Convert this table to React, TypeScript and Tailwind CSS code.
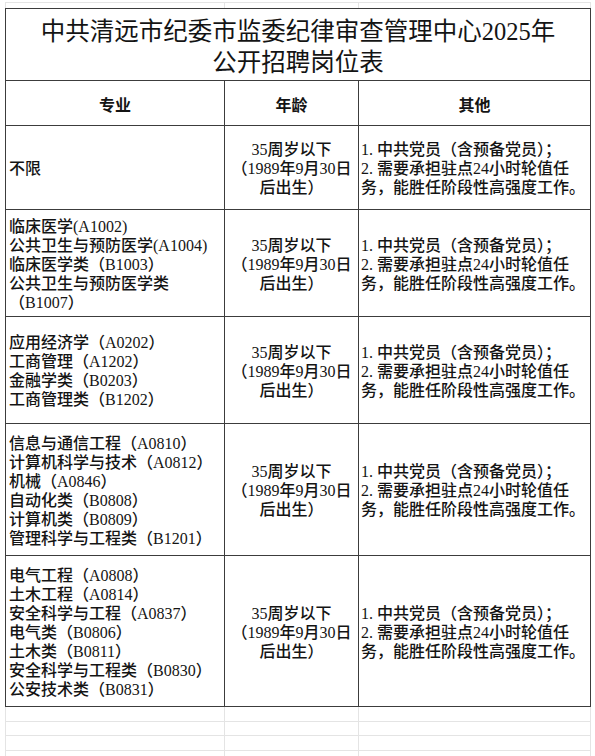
const serif = "font-['Liberation_Serif','Noto_Sans_CJK_SC',serif]";

const ageLines = ['35周岁以下', '（1989年9月30日', '后出生）'];
const otherLines = [
  '1. 中共党员（含预备党员）；',
  '2. 需要承担驻点24小时轮值任',
  '务，能胜任阶段性高强度工作。',
];

const rows = [
  { h: 'h-[84px]', majors: ['不限'] },
  {
    h: 'h-[107px]',
    majors: [
      '临床医学(A1002)',
      '公共卫生与预防医学(A1004)',
      '临床医学类（B1003）',
      '公共卫生与预防医学类',
      '（B1007）',
    ],
  },
  {
    h: 'h-[107px]',
    majors: ['应用经济学（A0202）', '工商管理（A1202）', '金融学类（B0203）', '工商管理类（B1202）'],
  },
  {
    h: 'h-[132px]',
    majors: [
      '信息与通信工程（A0810）',
      '计算机科学与技术（A0812）',
      '机械（A0846）',
      '自动化类（B0808）',
      '计算机类（B0809）',
      '管理科学与工程类（B1201）',
    ],
  },
  {
    h: 'h-[151px]',
    majors: [
      '电气工程（A0808）',
      '土木工程（A0814）',
      '安全科学与工程（A0837）',
      '电气类（B0806）',
      '土木类（B0811）',
      '安全科学与工程类（B0830）',
      '公安技术类（B0831）',
    ],
  },
];

const faintRows = ['h-[15px]', 'h-[14px]', 'h-[15px]', 'h-[15px]'];

function Lines({ lines }: { lines: string[] }) {
  return (
    <>
      {lines.map((l, i) => (
        <span key={i} className="block whitespace-nowrap">
          {l}
        </span>
      ))}
    </>
  );
}

export default function App() {
  return (
    <div className={`min-h-[756px] bg-white pl-[5px] pt-[2px] text-[#141414] ${serif}`}>
      <div className="grid w-[586px] grid-cols-[220px_134px_232px]">
        {/* spreadsheet grid above the table */}
        <div className="h-[6px] border-l border-r border-t border-[#e4e4e4]" />
        <div className="h-[6px] border-r border-t border-[#e4e4e4]" />
        <div className="h-[6px] border-r border-t border-[#e4e4e4]" />

        <div className="col-span-3 flex h-[73px] flex-col items-center justify-center border border-[#3c3c3c] pt-[4px] text-[24.5px] leading-[31px]">
          <span className="whitespace-nowrap">中共清远市纪委市监委纪律审查管理中心2025年</span>
          <span className="whitespace-nowrap">公开招聘岗位表</span>
        </div>

        <div className="flex h-[45px] items-center justify-center border-b border-l border-r border-[#3c3c3c] pt-[6px] text-[16px] font-bold">
          专业
        </div>
        <div className="flex h-[45px] items-center justify-center border-b border-r border-[#3c3c3c] pt-[6px] text-[16px] font-bold">
          年龄
        </div>
        <div className="flex h-[45px] items-center justify-center border-b border-r border-[#3c3c3c] pt-[6px] text-[16px] font-bold">
          其他
        </div>

        {rows.map((r, i) => (
          <div key={i} className="contents text-[16px] font-medium leading-[19px]">
            <div className={`flex ${r.h} flex-col justify-center border-b border-l border-r border-[#3c3c3c] pl-[3px] pt-[2px]`}>
              <Lines lines={r.majors} />
            </div>
            <div className={`flex ${r.h} flex-col items-center justify-center border-b border-r border-[#3c3c3c] pt-[2px] text-center`}>
              <Lines lines={ageLines} />
            </div>
            <div className={`flex ${r.h} flex-col justify-center border-b border-r border-[#3c3c3c] pl-[2px] pt-[2px]`}>
              <Lines lines={otherLines} />
            </div>
          </div>
        ))}

        {/* spreadsheet grid below the table */}
        {faintRows.map((h, i) => (
          <div key={i} className="contents">
            <div className={`${h} border-b border-l border-r border-[#e4e4e4]`} />
            <div className={`${h} border-b border-r border-[#e4e4e4]`} />
            <div className={`${h} border-b border-r border-[#e4e4e4]`} />
          </div>
        ))}
      </div>
    </div>
  );
}
